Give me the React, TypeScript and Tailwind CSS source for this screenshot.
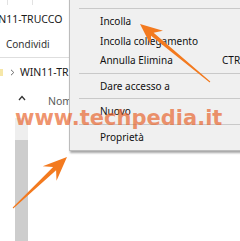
import React from "react";

const font = { fontFamily: '"Noto Sans", "Liberation Sans", sans-serif' };

function MenuItem({ label, shortcut }: { label: string; shortcut?: string }) {
  return (
    <div className="h-[19.5px] flex items-center pl-[30px] text-[10px] text-[#111] leading-none">
      <span className="flex-1 whitespace-nowrap">{label}</span>
      {shortcut && <span className="w-[46px] shrink-0 whitespace-nowrap">{shortcut}</span>}
    </div>
  );
}

function Sep() {
  return (
    <div className="h-[6px] flex items-center pl-[9px]">
      <div className="h-px flex-1 bg-[#c9c9c9]" />
    </div>
  );
}

export default function App() {
  return (
    <div className="relative w-[240px] h-[241px] overflow-hidden bg-white" style={font}>
      {/* explorer window content */}
      <div className="flex flex-col w-[69px] h-full">
        <div className="h-[7px] shrink-0 flex items-start">
          <div className="ml-[7px] shrink-0 w-px h-[5px] bg-[#e2e2e2]" />
          <div className="ml-[24px] shrink-0 w-px h-[5px] bg-[#e2e2e2]" />
        </div>
        <div className="h-[24px] shrink-0 flex items-center whitespace-nowrap">
          <span className="-ml-[15px] shrink-0 text-[10.5px] text-[#1a1a1a] leading-none">WIN11-TRUCCO</span>
        </div>
        <div className="h-[26px] shrink-0 flex items-center pl-[6px]">
          <span className="shrink-0 text-[10px] text-[#333] leading-none">Condividi</span>
        </div>
        <div className="h-px shrink-0 bg-[#dedede]" />
        <div className="h-[28px] shrink-0 flex items-center whitespace-nowrap">
          <div className="-ml-[6px] shrink-0 w-[9px] h-[7px] bg-[#f6e7a8]" />
          <svg width="5" height="7" viewBox="0 0 5 7" className="ml-[7px] shrink-0">
            <path d="M1 0.8 L3.8 3.5 L1 6.2" fill="none" stroke="#6a6a6a" strokeWidth="1" />
          </svg>
          <span className="ml-[5px] shrink-0 text-[10.5px] text-[#1a1a1a] leading-none">WIN11-TRUCCO</span>
        </div>
        <div className="h-[32px] shrink-0 flex items-start whitespace-nowrap">
          <svg width="8" height="6" viewBox="0 0 8 6" className="ml-[18px] mt-[9px] shrink-0">
            <path d="M1 5 L4 1.5 L7 5" fill="none" stroke="#333" strokeWidth="1.3" />
          </svg>
          <span className="ml-[22px] mt-[10px] shrink-0 text-[10.5px] text-[#5a5a5a] leading-none">Nome</span>
        </div>
        <div className="flex-1 flex">
          <div className="w-[15px] shrink-0" />
          <div className="w-[13px] shrink-0 flex flex-col">
            <div className="h-[22px] bg-[#eeeeee]" />
            <div className="flex-1 bg-[#cdcdcd]" />
          </div>
        </div>
      </div>

      {/* context menu */}
      <div className="absolute left-[69px] top-[-10px] w-[200px] bg-[#f0f0f0] border border-[#bcbcbc] shadow-[1px_2px_2px_rgba(0,0,0,0.35)] pb-[3.5px]">
        <div className="h-[14.5px]" />
        <Sep />
        <MenuItem label="Incolla" />
        <MenuItem label="Incolla collegamento" />
        <MenuItem label="Annulla Elimina" shortcut="CTRL+Z" />
        <Sep />
        <MenuItem label="Dare accesso a" />
        <Sep />
        <MenuItem label="Nuovo" />
        <Sep />
        <MenuItem label="Proprietà" />
      </div>

      {/* watermark */}
      <div
        className="absolute left-[15px] top-[108px] text-[21px] font-bold leading-none whitespace-nowrap text-[#e8652e]/70"
        style={{ fontFamily: '"DejaVu Sans", sans-serif' }}
      >
        www.techpedia.it
      </div>

      {/* arrows */}
      <svg className="absolute left-0 top-0" width="240" height="241" viewBox="0 0 240 241">
        <polygon
          points="140,24 163,30.7 153.6,32.7 210.3,81.6 209.7,82.4 151,35.7 150.9,45.4"
          fill="#f37a1f"
        />
        <polygon
          points="67,157 42.7,166.2 53.1,167.1 12.7,207.6 13.3,208.4 56.1,170.3 56.5,180.8"
          fill="#f37a1f"
        />
      </svg>
    </div>
  );
}
